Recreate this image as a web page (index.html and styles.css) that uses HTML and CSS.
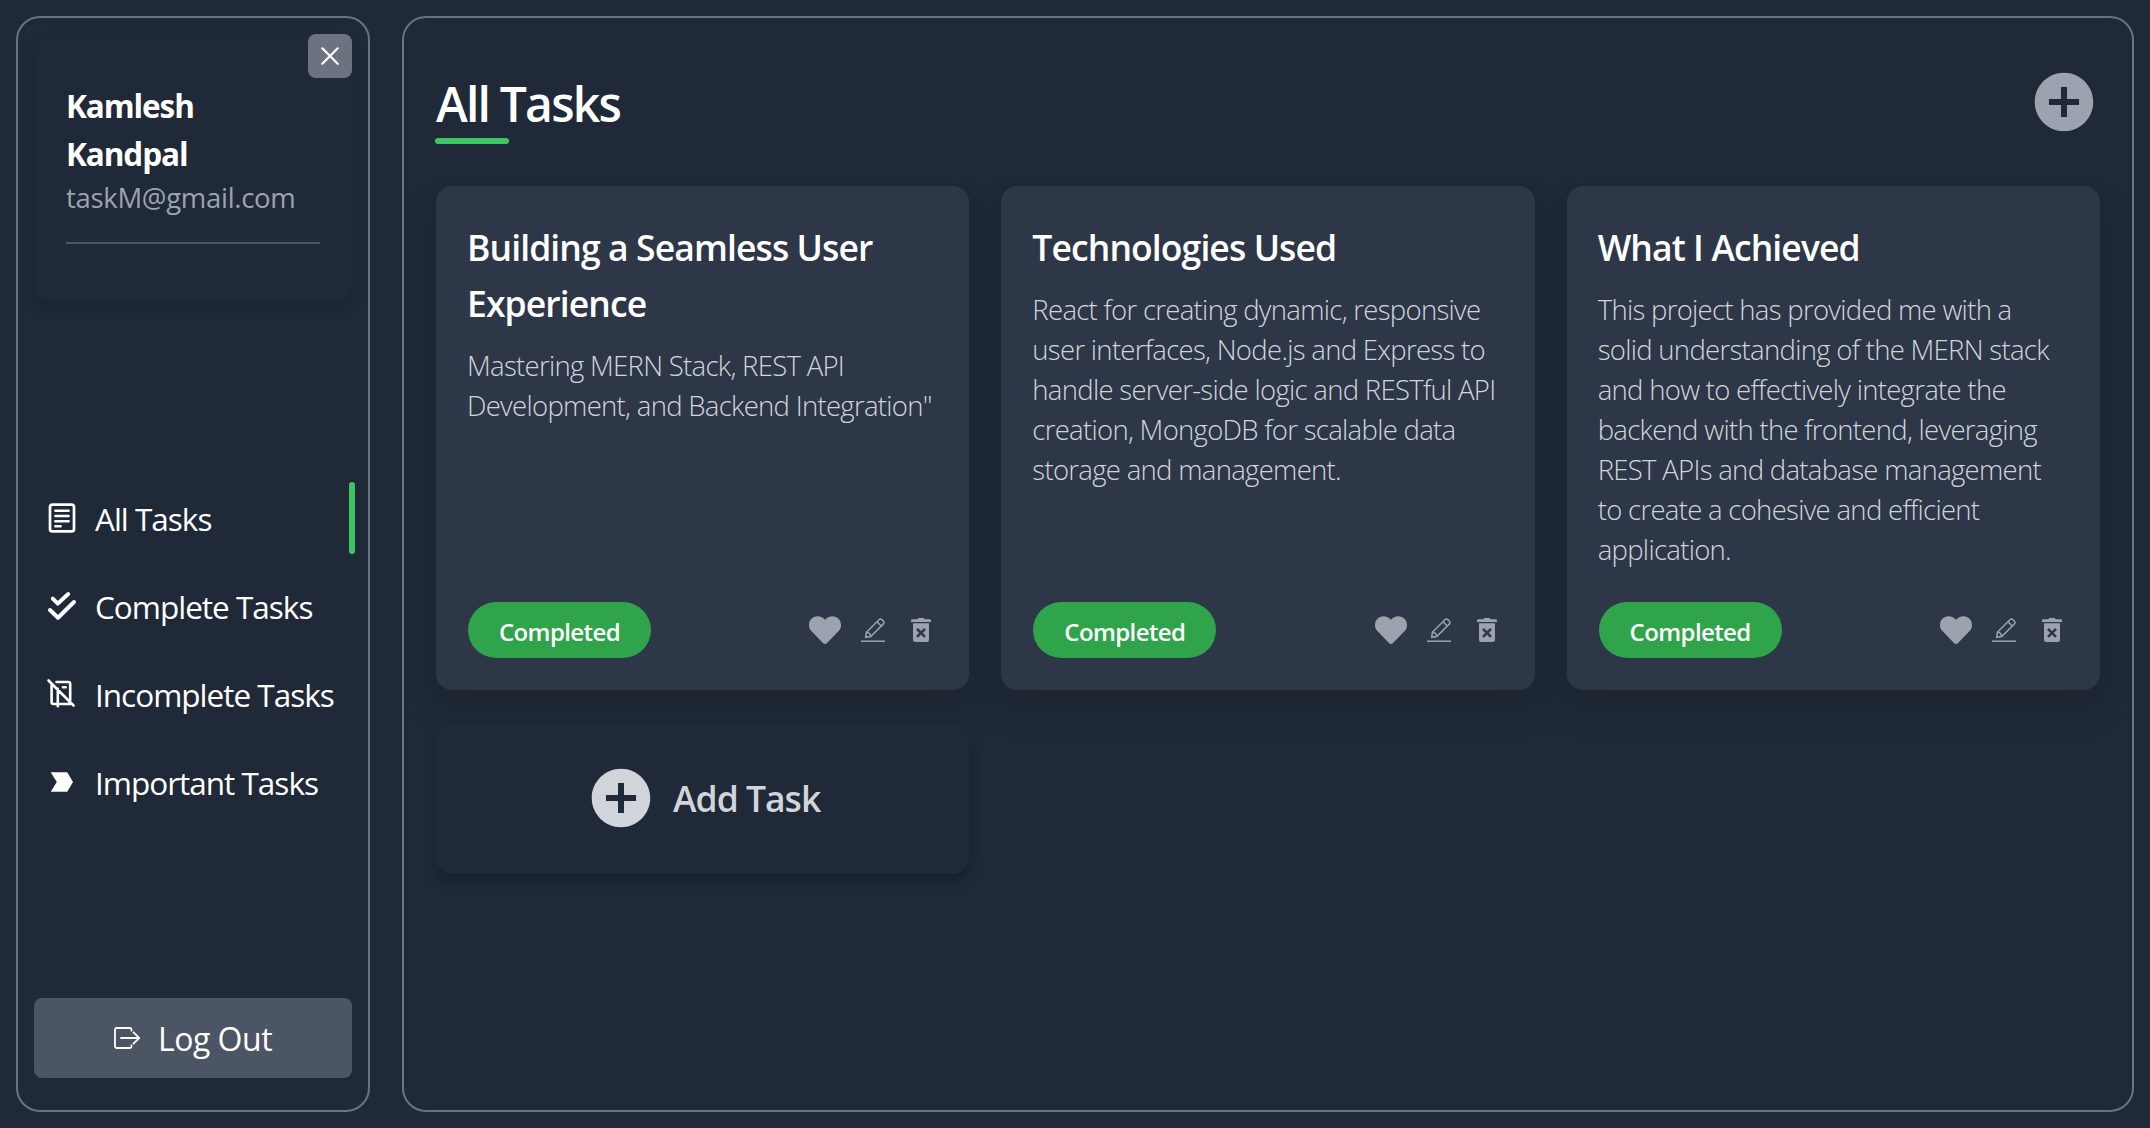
FILE: index.html
```html
<!DOCTYPE html>
<html lang="en">
<head>
<meta charset="utf-8">
<title>All Tasks</title>
<link rel="stylesheet" href="styles.css">
</head>
<body>
<svg class="sprite" aria-hidden="true">
  <symbol id="i-add" viewBox="0 0 512 512"><path fill="currentColor" d="M256 48C141.31 48 48 141.31 48 256s93.31 208 208 208 208-93.31 208-208S370.69 48 256 48zm107 229.3h-85.7V363h-42.6v-85.7H149v-42.6h85.7V149h42.6v85.7H363z"/></symbol>
  <symbol id="i-heart" viewBox="0 0 32 28"><path fill="currentColor" d="M16 28c-.7 0-1.300-.3-1.800-.8L2.600 15.300C.9 13.500 0 11.600 0 8.900 0 3.900 3.800.2 8.500.2c3 0 5.700 1.300 7.500 3.500C17.800 1.500 20.500.2 23.500.2 28.200.2 32 3.900 32 8.900c0 2.700-.9 4.600-2.600 6.400L17.800 27.200c-.5.5-1.100.8-1.800.8z"/></symbol>
  <symbol id="i-edit" viewBox="0 0 24 24"><g fill="none" stroke="currentColor" stroke-width="1.500"><path d="M4.700 19.300l.7-5L17.900 1.800a2.200 2.200 0 0 1 3.100 0l1.200 1.200a2.200 2.200 0 0 1 0 3.100L9.700 18.600zM5.400 14.300c2.600.2 4.100 1.700 4.300 4.300M16 3.700l4.300 4.300"/><path d="M0 23.200h24"/></g></symbol>
  <symbol id="i-trash" viewBox="0 0 20 24"><path fill="currentColor" d="M6.500 1.200 7.200 0h5.600l.7 1.200H19a1 1 0 0 1 1 1V4H0V2.200a1 1 0 0 1 1-1zM2 5.200h16V21.500A2.500 2.500 0 0 1 15.500 24h-11A2.500 2.500 0 0 1 2 21.500z"/><path class="cut" d="M6 10.800l8 8m0-8l-8 8"/></symbol>
</svg>
<div class="app">
  <aside class="sidebar">
    <button class="close" aria-label="Close"><svg viewBox="0 0 18 18"><path d="M1.300 1.300l15.400 15.400m0-15.400L1.300 16.700"/></svg></button>
    <div class="profile">
      <h2>Kamlesh Kandpal</h2>
      <p>taskM@gmail.com</p>
      <hr>
    </div>
    <nav>
      <a class="active"><svg viewBox="0 0 32 32"><g fill="none" stroke="currentColor" stroke-width="2.700" stroke-linecap="round"><rect x="4" y="2.600" width="24" height="26.800" rx="2.500"/><path d="M9.300 8.700h13.400M9.300 14h13.400M9.300 19.300h13.400M9.300 24.200h5.400" stroke-width="2.400"/></g></svg><span>All Tasks</span></a>
      <a><svg viewBox="0 0 32 32"><path fill="none" stroke="currentColor" stroke-width="4" stroke-linecap="round" stroke-linejoin="round" d="M6.800 8.600l5 5L22.200 4M4 20l8 7.700 16-15.700"/></svg><span>Complete Tasks</span></a>
      <a><svg viewBox="0 0 32 32"><path fill="none" stroke="currentColor" stroke-width="2.600" stroke-linecap="round" stroke-linejoin="round" d="M2.500 2.500l25 25M5.600 6v18a2 2 0 0 0 2 2H24M11.800 10.800v17.500M10.500 4h11.700a2 2 0 0 1 2 2v16M17 9.300h2.700" /></svg><span>Incomplete Tasks</span></a>
      <a><svg viewBox="0 0 32 32"><path fill="currentColor" d="M4.700 6.200h16.500L27 16l-5.800 9.800H4.700L10.800 16z"/></svg><span>Important Tasks</span></a>
    </nav>
    <button class="logout"><svg viewBox="0 0 26 22"><path d="M17.500 3.500V2.500A1.600 1.600 0 0 0 15.900 1H2.500A1.600 1.600 0 0 0 1 2.500v17A1.600 1.600 0 0 0 2.500 21h13.400a1.600 1.600 0 0 0 1.600-1.500V18.500M7 11h18M19.500 5.300 25.300 11 19.500 16.700"/></svg><span>Log Out</span></button>
  </aside>
  <main>
    <header>
      <h1>All Tasks</h1>
      <button class="add" aria-label="Add task"><svg><use href="#i-add"/></svg></button>
    </header>
    <section class="grid">
      <article class="card">
        <h3>Building a Seamless User<br>Experience</h3>
        <p>Mastering MERN Stack, REST API<br>Development, and Backend Integration"</p>
        <footer><span class="pill">Completed</span><svg class="heart"><use href="#i-heart"/></svg><svg class="edit"><use href="#i-edit"/></svg><svg class="trash"><use href="#i-trash"/></svg></footer>
      </article>
      <article class="card">
        <h3>Technologies Used</h3>
        <p>React for creating dynamic, responsive<br>user interfaces, Node.js and Express to<br>handle server-side logic and RESTful API<br>creation, MongoDB for scalable data<br>storage and management.</p>
        <footer><span class="pill">Completed</span><svg class="heart"><use href="#i-heart"/></svg><svg class="edit"><use href="#i-edit"/></svg><svg class="trash"><use href="#i-trash"/></svg></footer>
      </article>
      <article class="card">
        <h3>What I Achieved</h3>
        <p>This project has provided me with a<br>solid understanding of the MERN stack<br>and how to effectively integrate the<br>backend with the frontend, leveraging<br>REST APIs and database management<br>to create a cohesive and efficient<br>application.</p>
        <footer><span class="pill">Completed</span><svg class="heart"><use href="#i-heart"/></svg><svg class="edit"><use href="#i-edit"/></svg><svg class="trash"><use href="#i-trash"/></svg></footer>
      </article>
      <button class="new"><svg><use href="#i-add"/></svg><span>Add Task</span></button>
    </section>
  </main>
</div>
</body>
</html>
```
FILE: styles.css
```css
* { box-sizing: border-box; margin: 0; padding: 0; }
body { background: #1f2937; color: #fff; font-family: "Open Sans", "Noto Sans", sans-serif; overflow: hidden; }
button { border: 0; background: none; color: inherit; font: inherit; }
svg { display: block; flex: none; }
.sprite { position: absolute; width: 0; height: 0; }
.app { display: flex; gap: 32px; height: 1128px; padding: 16px; }

.sidebar { width: 354px; flex: none; border: 2px solid #6b7280; border-radius: 24px; padding: 16px 16px 32px; display: flex; flex-direction: column; justify-content: space-between; position: relative; }
.close { position: absolute; top: 16px; right: 16px; width: 44px; height: 44px; border-radius: 8px; background: #6b7280; display: grid; place-items: center; }
.close svg { width: 18px; height: 18px; fill: none; stroke: #fff; stroke-width: 2.200; stroke-linecap: round; }
.profile { height: 266px; padding: 48px 32px 0; border-radius: 16px; box-shadow: 0 8px 12px -2px rgba(24, 36, 42, .5); }
.profile h2 { width: 200px; font-size: 31.500px; line-height: 48px; font-weight: 700; letter-spacing: -1.100px; }
.profile p { font-size: 27.500px; line-height: 40px; color: #9ca3af; letter-spacing: -.3px; white-space: nowrap; }
.profile hr { border: 0; height: 2px; background: #4b5563; margin-top: 24px; }
nav { display: flex; flex-direction: column; gap: 16px; padding-top: 2px; }
nav a { height: 72px; display: flex; align-items: center; gap: 17px; padding-left: 12px; font-size: 31.500px; letter-spacing: -1px; white-space: nowrap; position: relative; }
nav svg { width: 32px; height: 32px; }
.active::after { content: ""; position: absolute; right: -3px; top: 0; width: 6px; height: 72px; border-radius: 3px; background: #40c463; }
.logout { height: 80px; border-radius: 8px; background: #4b5563; display: flex; align-items: center; justify-content: center; gap: 18px; font-size: 32px; letter-spacing: -.5px; }
.logout svg { width: 26px; height: 22px; fill: none; stroke: #fff; stroke-width: 1.800; stroke-linecap: round; }

main { flex: 1; border: 2px solid #6b7280; border-radius: 24px; padding: 32px; }
header { height: 136px; display: flex; justify-content: space-between; }
h1 { font-size: 48px; line-height: 72px; font-weight: 600; margin-top: 18px; letter-spacing: -1.800px; position: relative; align-self: flex-start; }
h1::after { content: ""; position: absolute; left: -1px; top: 70px; width: 74px; height: 6px; border-radius: 3px; background: #40c463; }
.add { height: 72px; color: #9ca3af; margin-top: 16px; }
.add svg, .new svg { width: 72px; height: 72px; }
.grid { display: grid; grid-template-columns: repeat(3, 1fr); gap: 32px; align-items: start; }
.card { height: 504px; border-radius: 16px; background: #2d3748; padding: 32px; display: flex; flex-direction: column; box-shadow: 0 20px 30px -6px rgba(30, 38, 44, .5), 0 8px 12px -4px rgba(30, 38, 44, .5); }
h3 { font-size: 35.500px; line-height: 56px; font-weight: 600; letter-spacing: -.9px; margin: 1px 0 0 -1px; white-space: nowrap; }
.card p { margin: 15px 0 0 -1px; font-size: 27.500px; line-height: 40px; font-weight: 300; color: #d1d5db; letter-spacing: -.7px; white-space: nowrap; }
footer { margin-top: auto; display: flex; align-items: center; color: #9ca3af; padding-right: 6px; }
.pill { width: 183px; height: 56px; padding-top: 2px; border-radius: 28px; background: #2fa44b; color: #fff; display: grid; place-items: center; font-size: 24px; font-weight: 600; letter-spacing: -.6px; margin-right: auto; }
.heart { width: 32px; height: 28px; margin-right: 20px; }
.edit { width: 24px; height: 24px; margin-right: 26px; }
.trash { width: 20px; height: 24px; }
.cut { fill: none; stroke: #2d3748; stroke-width: 2.600; }
.new { height: 152px; border-radius: 16px; display: flex; align-items: center; justify-content: center; gap: 16px; color: #d1d5db; background: #1f2937; font-size: 35.500px; font-weight: 600; letter-spacing: -1px; box-shadow: 0 8px 12px -2px rgba(17, 24, 44, .7); }
```
